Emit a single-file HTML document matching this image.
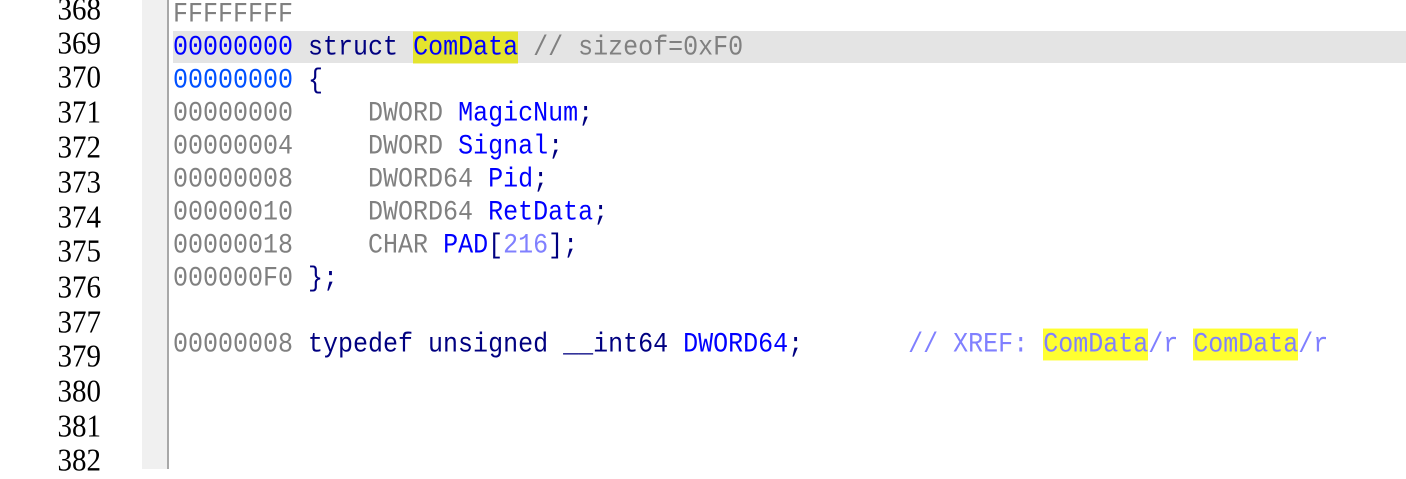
<!DOCTYPE html>
<html><head><meta charset="utf-8"><style>
html,body{margin:0;padding:0;width:1406px;height:469px;overflow:hidden;background:#fff;}
.ln{position:absolute;left:0;width:101px;text-align:right;font-family:"Liberation Serif",serif;font-size:29px;color:#000;line-height:34px;transform:scaleY(1.08);}
.gut{position:absolute;left:142px;top:0;width:25px;height:469px;background:#f0f0f0;}
.sep{position:absolute;left:167px;top:0;width:2px;height:469px;background:#a8a8a8;}
.c{position:absolute;left:173px;font-family:"Liberation Mono",monospace;font-size:25px;line-height:33px;white-space:pre;color:#000080;}
.c>.in{display:inline-block;transform:scaleY(1.1);}
.a{color:#808080}.b{color:#0000ff}.b2{color:#0050ff}.k{color:#000080}.t{color:#0000ff}.g{color:#808080}.p{color:#8080ff}
.y{background:#e4e42e}.y2{background:#ffff30}
.hl{position:absolute;left:173px;top:31px;width:1233px;height:32px;background:#e4e4e4;}
</style></head><body>
<div class="ln" style="top:-7px">368</div>
<div class="ln" style="top:27px">369</div>
<div class="ln" style="top:61px">370</div>
<div class="ln" style="top:96px">371</div>
<div class="ln" style="top:131px">372</div>
<div class="ln" style="top:166px">373</div>
<div class="ln" style="top:201px">374</div>
<div class="ln" style="top:235px">375</div>
<div class="ln" style="top:271px">376</div>
<div class="ln" style="top:306px">377</div>
<div class="ln" style="top:340px">379</div>
<div class="ln" style="top:375px">380</div>
<div class="ln" style="top:410px">381</div>
<div class="ln" style="top:444px">382</div>
<div class="gut"></div><div class="sep"></div>
<div class="hl"></div>
<div class="c" style="top:-2px"><span class="in"><span class="a">FFFFFFFF</span></span></div>
<div class="c" style="top:31px"><span class="in"><span class="b">00000000</span> struct <span class="t y">ComData</span> <span class="g">// sizeof=0xF0</span></span></div>
<div class="c" style="top:64px"><span class="in"><span class="b2">00000000</span> {</span></div>
<div class="c" style="top:97px"><span class="in"><span class="a">00000000</span>     <span class="g">DWORD</span> <span class="t">MagicNum</span>;</span></div>
<div class="c" style="top:130px"><span class="in"><span class="a">00000004</span>     <span class="g">DWORD</span> <span class="t">Signal</span>;</span></div>
<div class="c" style="top:163px"><span class="in"><span class="a">00000008</span>     <span class="g">DWORD64</span> <span class="t">Pid</span>;</span></div>
<div class="c" style="top:196px"><span class="in"><span class="a">00000010</span>     <span class="g">DWORD64</span> <span class="t">RetData</span>;</span></div>
<div class="c" style="top:229px"><span class="in"><span class="a">00000018</span>     <span class="g">CHAR</span> <span class="t">PAD</span>[<span class="p">216</span>];</span></div>
<div class="c" style="top:262px"><span class="in"><span class="a">000000F0</span> };</span></div>
<div class="c" style="top:328px"><span class="in"><span class="a">00000008</span> typedef unsigned __int64 <span class="t">DWORD64</span>;       <span class="p">// XREF: <span class="y2">ComData</span>/r <span class="y2">ComData</span>/r</span></span></div>
</body></html>
